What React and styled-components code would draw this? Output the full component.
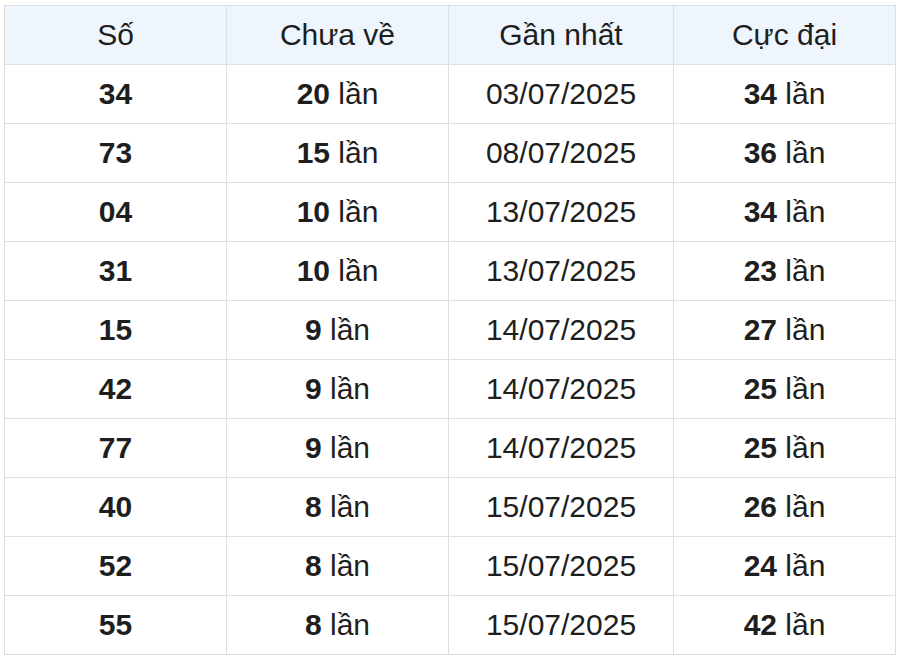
import React from "react";
import styled, { createGlobalStyle } from "styled-components";

const GlobalStyle = createGlobalStyle`
    body {
        margin: 0;
        background: #fff;
        font-family: "Liberation Sans", Arial, sans-serif;
    }
`;

const rows = [
    ["34", "20", "03/07/2025", "34"],
    ["73", "15", "08/07/2025", "36"],
    ["04", "10", "13/07/2025", "34"],
    ["31", "10", "13/07/2025", "23"],
    ["15", "9", "14/07/2025", "27"],
    ["42", "9", "14/07/2025", "25"],
    ["77", "9", "14/07/2025", "25"],
    ["40", "8", "15/07/2025", "26"],
    ["52", "8", "15/07/2025", "24"],
    ["55", "8", "15/07/2025", "42"],
];

const widths = [222, 222, 225, 222];

const Wrap = styled.div`
    padding: 5px 4px 0 4px;
`;

const Table = styled.table`
    width: 892px;
    border-collapse: collapse;
    table-layout: fixed;
    color: #1e1e1e;
    font-size: 30px;
`;

const Col = styled.col`
    width: ${p => p.$w}px;
`;

const HeadCell = styled.th`
    height: 58px;
    padding: 0;
    background: #eef5fd;
    border: 1px solid #dcdfe3;
    font-weight: normal;
    text-align: center;
`;

const Cell = styled.td`
    height: 58px;
    padding: 0;
    border: 1px solid #dcdfe3;
    text-align: center;
    font-weight: ${p => (p.$bold ? "bold" : "normal")};
`;

const Num = styled.b`
    font-weight: bold;
`;

const App = () => (
    <>
        <GlobalStyle />
        <Wrap>
            <Table>
                <colgroup>
                    {widths.map((w, i) => (
                        <Col key={i} $w={w} />
                    ))}
                </colgroup>
                <thead>
                    <tr>
                        <HeadCell>Số</HeadCell>
                        <HeadCell>Chưa về</HeadCell>
                        <HeadCell>Gần nhất</HeadCell>
                        <HeadCell>Cực đại</HeadCell>
                    </tr>
                </thead>
                <tbody>
                    {rows.map(r => (
                        <tr key={r[0]}>
                            <Cell $bold>{r[0]}</Cell>
                            <Cell>
                                <Num>{r[1]}</Num> lần
                            </Cell>
                            <Cell>{r[2]}</Cell>
                            <Cell>
                                <Num>{r[3]}</Num> lần
                            </Cell>
                        </tr>
                    ))}
                </tbody>
            </Table>
        </Wrap>
    </>
);

export default App;
